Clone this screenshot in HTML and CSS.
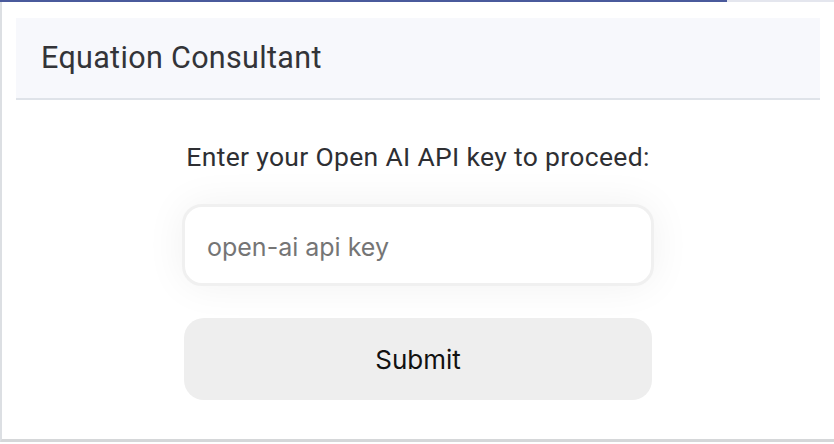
FILE: index.html
```html
<!DOCTYPE html>
<html>
<head>
<meta charset="utf-8">
<link rel="stylesheet" href="styles.css">
</head>
<body>
<div class="frame">
  <div class="topline"><div class="topline-blue"></div><div class="topline-rest"></div></div>
  <div class="card">
    <div class="header"><h1 class="title">Equation Consultant</h1></div>
    <div class="body">
      <p class="prompt">Enter your Open AI API key to proceed:</p>
      <input class="key-input" type="text" placeholder="open-ai api key">
      <button class="submit">Submit</button>
    </div>
  </div>
</div>
</body>
</html>
```
FILE: styles.css
```css
html, body {
  margin: 0;
  padding: 0;
  background: #ffffff;
}
.frame {
  width: 834px;
  height: 444px;
  display: flex;
  flex-direction: column;
  overflow: hidden;
}
.topline {
  display: flex;
  height: 2px;
  flex: none;
}
.topline-blue {
  width: 727px;
  background: #4a5a9c;
}
.topline-rest {
  flex: 1;
  background: #e4e6ee;
}
.card {
  height: 440px;
  flex: none;
  border-left: 2px solid #dcdfe3;
  border-bottom: 3px solid #d5d7d9;
  background: #fff;
  padding: 16px 14px 0 14px;
  box-sizing: border-box;
  display: flex;
  flex-direction: column;
}
.header {
  height: 82px;
  background: #f7f8fc;
  border-bottom: 2px solid #dfe3e9;
  box-sizing: border-box;
  display: flex;
  align-items: center;
  padding-left: 25px;
}
.title {
  margin: 0;
  font-family: "Roboto", "Liberation Sans", sans-serif;
  font-weight: 400;
  font-size: 30.5px;
  color: #333438;
  letter-spacing: 0.33px;
  line-height: 40px;
}
.body {
  display: flex;
  flex-direction: column;
  align-items: center;
  padding-top: 39px;
}
.prompt {
  margin: 0;
  font-family: "Roboto", "Liberation Sans", sans-serif;
  font-size: 26.5px;
  color: #2e2f33;
  letter-spacing: 0.32px;
  line-height: 36px;
}
.key-input {
  margin-top: 29px;
  width: 472px;
  height: 82px;
  box-sizing: border-box;
  border: 3px solid #f0f0f0;
  border-radius: 20px;
  background: #fff;
  padding: 4px 20px 0 22px;
  font-family: "Inter", "Roboto", sans-serif;
  font-size: 25px;
  color: #333;
  box-shadow: 0 0 40px rgba(0,0,0,0.06);
  outline: none;
}
.key-input::placeholder {
  color: #757575;
}
.submit {
  margin-top: 32px;
  width: 468px;
  height: 82px;
  border: none;
  border-radius: 20px;
  background: #eeeeee;
  padding-top: 2px;
  font-family: "Inter", "Roboto", sans-serif;
  font-size: 26px;
  color: #111;
}
```
